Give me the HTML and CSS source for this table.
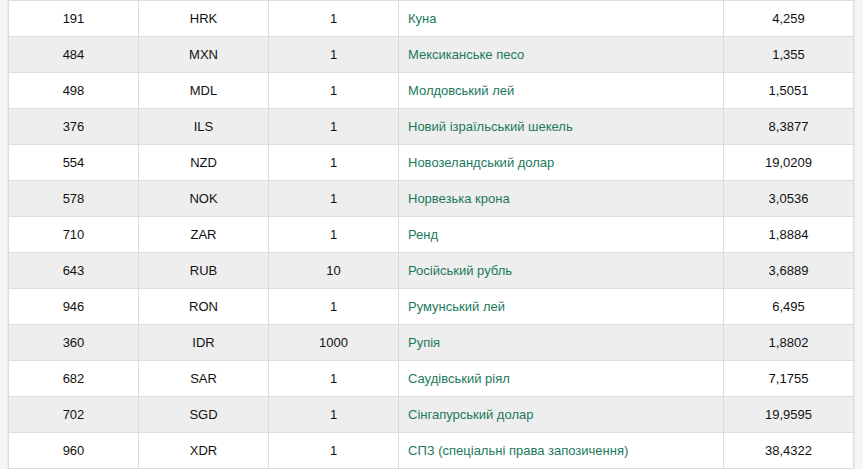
FILE: index.html
```html
<!DOCTYPE html>
<html lang="uk">
<head>
<meta charset="utf-8">
<title>Курси валют</title>
<link rel="stylesheet" href="styles.css">
</head>
<body>
<div class="wrap">
<table class="rates">
<colgroup>
<col class="c-code"><col class="c-char"><col class="c-unit"><col class="c-name"><col class="c-rate">
</colgroup>
<tbody>
<tr><td>191</td><td>HRK</td><td>1</td><td class="name">Куна</td><td>4,259</td></tr>
<tr><td>484</td><td>MXN</td><td>1</td><td class="name">Мексиканське песо</td><td>1,355</td></tr>
<tr><td>498</td><td>MDL</td><td>1</td><td class="name">Молдовський лей</td><td>1,5051</td></tr>
<tr><td>376</td><td>ILS</td><td>1</td><td class="name">Новий ізраїльський шекель</td><td>8,3877</td></tr>
<tr><td>554</td><td>NZD</td><td>1</td><td class="name">Новозеландський долар</td><td>19,0209</td></tr>
<tr><td>578</td><td>NOK</td><td>1</td><td class="name">Норвезька крона</td><td>3,0536</td></tr>
<tr><td>710</td><td>ZAR</td><td>1</td><td class="name">Ренд</td><td>1,8884</td></tr>
<tr><td>643</td><td>RUB</td><td>10</td><td class="name">Російський рубль</td><td>3,6889</td></tr>
<tr><td>946</td><td>RON</td><td>1</td><td class="name">Румунський лей</td><td>6,495</td></tr>
<tr><td>360</td><td>IDR</td><td>1000</td><td class="name">Рупія</td><td>1,8802</td></tr>
<tr><td>682</td><td>SAR</td><td>1</td><td class="name">Саудівський ріял</td><td>7,1755</td></tr>
<tr><td>702</td><td>SGD</td><td>1</td><td class="name">Сінгапурський долар</td><td>19,9595</td></tr>
<tr><td>960</td><td>XDR</td><td>1</td><td class="name">СПЗ (спеціальні права запозичення)</td><td>38,4322</td></tr>
</tbody>
</table>
</div>
</body>
</html>
```
FILE: styles.css
```css
html, body {
  margin: 0;
  padding: 0;
  background: #f6f6f6;
}
body {
  font-family: "Liberation Sans", Arial, sans-serif;
  font-size: 13px;
  color: #111;
}
.wrap {
  padding-left: 8px;
  width: 845px;
}
.rates {
  width: 845px;
  border-collapse: collapse;
  table-layout: fixed;
  background: #fff;
  box-shadow: 0 0 1px 1px #ececec;
}
.c-code, .c-char, .c-unit, .c-rate { width: 130px; }
.c-name { width: 325px; }
.rates td {
  height: 36px;
  padding: 0 9px;
  border: 1px solid #dcdcdc;
  text-align: center;
  vertical-align: middle;
  box-sizing: border-box;
}
.rates tr:nth-child(even) td {
  background: #eeeeee;
}
.rates td.name {
  text-align: left;
  color: #1b7a5c;
}
```
